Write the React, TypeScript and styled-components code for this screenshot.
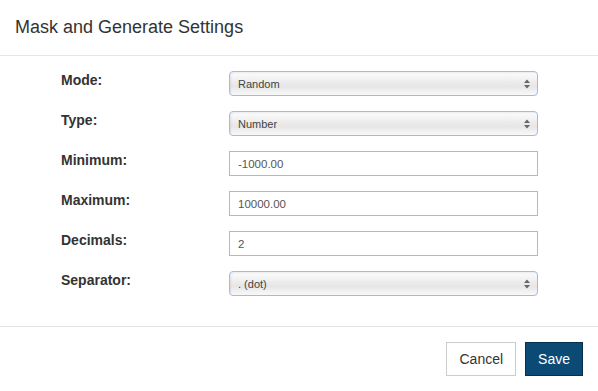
import React from 'react';
import styled, { createGlobalStyle } from 'styled-components';

const GlobalStyle = createGlobalStyle`
  body {
    margin: 0;
    background: #fff;
    font-family: "Liberation Sans", Arial, sans-serif;
    color: #333;
  }
`;

const Dialog = styled.div`
  width: 598px;
  background: #fff;
`;

const Header = styled.div`
  padding: 15px;
  border-bottom: 1px solid #e5e5e5;
`;

const Title = styled.h4`
  margin: 0;
  font-size: 18px;
  font-weight: normal;
  line-height: 25px;
  color: #333;
`;

const Body = styled.div`
  padding: 15px 0 30px 61px;
  display: grid;
  grid-template-columns: 168px 309px;
  grid-auto-rows: 25px;
  row-gap: 15px;
`;

const Label = styled.label`
  font-size: 14px;
  font-weight: bold;
  line-height: 19px;
  color: #333;
`;

const SelectWrap = styled.div`
  position: relative;
  height: 25px;
`;

const Select = styled.select`
  appearance: none;
  -webkit-appearance: none;
  width: 100%;
  height: 25px;
  box-sizing: border-box;
  margin: 0;
  padding: 0 24px 0 8px;
  border: 1px solid #98bfe8;
  border-radius: 4px;
  background: linear-gradient(#fdfdfd 0%, #eeeeee 40%, #e6e6e6 62%, #f9f9f9 100%);
  box-shadow: inset 1px 1px 2px rgba(0, 0, 0, 0.08);
  font-family: "Liberation Sans", Arial, sans-serif;
  font-size: 11px;
  color: #444;
  outline: none;
`;

const Arrows = styled.svg`
  position: absolute;
  right: 8px;
  top: 8px;
  pointer-events: none;
`;

const Input = styled.input`
  width: 100%;
  height: 25px;
  box-sizing: border-box;
  margin: 0;
  padding: 0 8px;
  border: 1px solid #98bfe8;
  border-radius: 0;
  background: #fff;
  font-family: "Liberation Sans", Arial, sans-serif;
  font-size: 11.5px;
  color: #555;
  outline: none;
`;

const Footer = styled.div`
  display: flex;
  justify-content: flex-end;
  gap: 9px;
  padding: 15px;
  border-top: 1px solid #e5e5e5;
`;

const Button = styled.button<{ $primary?: boolean }>`
  height: 34px;
  padding: 0 12px;
  font-family: "Liberation Sans", Arial, sans-serif;
  font-size: 14px;
  border-radius: 0;
  cursor: pointer;
  background: ${p => (p.$primary ? '#0c4a76' : '#fff')};
  color: ${p => (p.$primary ? '#fff' : '#333')};
  border: 1px solid ${p => (p.$primary ? '#0a2f4c' : '#ccc')};
`;

const ArrowIcon = () => (
  <Arrows width="6" height="10" viewBox="0 0 6 10">
    <path d="M3 0.5 L6 4 L0 4 Z" fill="#666" />
    <path d="M0 6 L6 6 L3 9.5 Z" fill="#666" />
  </Arrows>
);

const SelectField = ({ value, options }: { value: string; options: string[] }) => (
  <SelectWrap>
    <Select defaultValue={value}>
      {options.map(o => (
        <option key={o}>{o}</option>
      ))}
    </Select>
    <ArrowIcon />
  </SelectWrap>
);

const App: React.FC = () => {
  return (
    <>
      <GlobalStyle />
      <Dialog>
        <Header>
          <Title>Mask and Generate Settings</Title>
        </Header>
        <Body>
          <Label>Mode:</Label>
          <SelectField value="Random" options={['Random', 'Fixed', 'Sequence']} />
          <Label>Type:</Label>
          <SelectField value="Number" options={['Number', 'Text', 'Date']} />
          <Label>Minimum:</Label>
          <Input defaultValue="-1000.00" />
          <Label>Maximum:</Label>
          <Input defaultValue="10000.00" />
          <Label>Decimals:</Label>
          <Input defaultValue="2" />
          <Label>Separator:</Label>
          <SelectField value=". (dot)" options={['. (dot)', ', (comma)']} />
        </Body>
        <Footer>
          <Button>Cancel</Button>
          <Button $primary>Save</Button>
        </Footer>
      </Dialog>
    </>
  );
};

export default App;
